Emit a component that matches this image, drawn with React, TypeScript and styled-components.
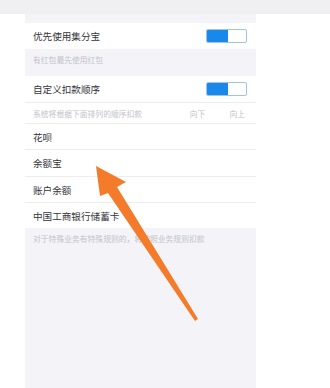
import React from "react";
import styled, { createGlobalStyle } from "styled-components";

const Global = createGlobalStyle`
  html, body { margin: 0; padding: 0; background: #ffffff; }
  body { font-family: "Noto Sans CJK SC", "Noto Sans", sans-serif; }
`;

const Page = styled.div`
  position: relative;
  width: 330px;
  height: 388px;
  overflow: hidden;
  background: #ffffff;
  display: flex;
  flex-direction: column;
`;

const TopStrip = styled.div`
  height: 14px;
  background: #f0f0f3;
  flex: none;
`;

const Panel = styled.div`
  margin-left: 25px;
  width: 231px;
  flex: 1;
  background: #f4f4f8;
  display: flex;
  flex-direction: column;
  padding-top: 9px;
`;

const Row = styled.div<{ $h: number; $line?: boolean }>`
  height: ${(p) => p.$h}px;
  background: #ffffff;
  display: flex;
  align-items: center;
  padding: 0 9px 0 8px;
  box-sizing: border-box;
  border-top: ${(p) => (p.$line ? "1px solid #ececef" : "none")};
`;

const Label = styled.span`
  font-size: 9.6px;
  color: #35353a;
  flex: 1;
`;

const Note = styled.div<{ $h: number }>`
  height: ${(p) => p.$h}px;
  padding: 5px 8px 0;
  box-sizing: border-box;
  font-size: 7.8px;
  color: #c2c2c8;
  line-height: 11px;
`;

const SubRow = styled(Row)`
  padding-right: 11px;
`;

const SubText = styled.span`
  font-size: 7.8px;
  color: #c2c2c8;
  flex: 1;
`;

const Dir = styled.span<{ $ml: number }>`
  font-size: 7.8px;
  color: #bfbfc5;
  margin-left: ${(p) => p.$ml}px;
`;

const Toggle = styled.div`
  width: 41px;
  height: 14px;
  border: 1px solid #9fc3e0;
  border-radius: 2px;
  box-sizing: border-box;
  display: flex;
  overflow: hidden;
  background: #ffffff;
`;

const ToggleOn = styled.div`
  width: 21px;
  background: #1888ea;
`;

const Arrow = styled.svg`
  position: absolute;
  left: 0;
  top: 0;
  pointer-events: none;
`;

export default function App() {
  return (
    <Page>
      <Global />
      <TopStrip />
      <Panel>
        <Row $h={26}>
          <Label>优先使用集分宝</Label>
          <Toggle>
            <ToggleOn />
          </Toggle>
        </Row>
        <Note $h={27}>有红包最先使用红包</Note>
        <Row $h={26}>
          <Label>自定义扣款顺序</Label>
          <Toggle>
            <ToggleOn />
          </Toggle>
        </Row>
        <SubRow $h={21} $line>
          <SubText>系统将根据下面排列的顺序扣款</SubText>
          <Dir $ml={0}>向下</Dir>
          <Dir $ml={24}>向上</Dir>
        </SubRow>
        <Row $h={26} $line>
          <Label>花呗</Label>
        </Row>
        <Row $h={27} $line>
          <Label>余额宝</Label>
        </Row>
        <Row $h={26} $line>
          <Label>账户余额</Label>
        </Row>
        <Row $h={26} $line>
          <Label>中国工商银行储蓄卡</Label>
        </Row>
        <Note $h={40}>对于特殊业务有特殊规则的，将按照业务规则扣款</Note>
      </Panel>
      <Arrow width="330" height="388" viewBox="0 0 330 388">
        <polygon
          points="96,166 126,182 117,187 198,319 195,321 108,193 100,196"
          fill="#f47b2a"
        />
      </Arrow>
    </Page>
  );
}
